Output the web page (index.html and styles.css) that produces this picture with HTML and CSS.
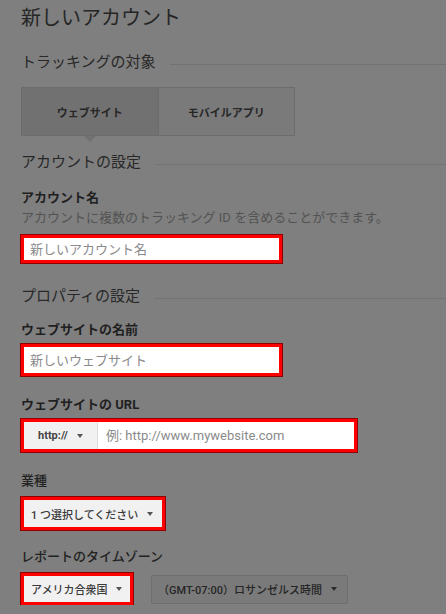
FILE: index.html
```html
<!DOCTYPE html>
<html lang="ja">
<head>
<meta charset="utf-8">
<title>新しいアカウント</title>
<link rel="stylesheet" href="styles.css">
</head>
<body>
<main class="page">
  <h1 class="title">新しいアカウント</h1>

  <h2 class="section sec-tracking"><span>トラッキングの対象</span></h2>
  <div class="tabs">
    <div class="tab active">ウェブサイト</div>
    <div class="tab">モバイルアプリ</div>
  </div>

  <h2 class="section sec-account"><span>アカウントの設定</span></h2>
  <div class="label lbl-accname">アカウント名</div>
  <p class="help">アカウントに複数のトラッキング ID を含めることができます。</p>
  <input class="hl text-input in-account" type="text" placeholder="新しいアカウント名">

  <h2 class="section sec-property"><span>プロパティの設定</span></h2>
  <div class="label lbl-site">ウェブサイトの名前</div>
  <input class="hl text-input in-site" type="text" placeholder="新しいウェブサイト">

  <div class="label lbl-url">ウェブサイトの URL</div>
  <div class="hl url-field">
    <div class="proto">http://<span class="caret"></span></div>
    <input class="url-input" type="text" placeholder="例: http://www.mywebsite.com">
  </div>

  <div class="label plain lbl-industry">業種</div>
  <div class="hl select sel-industry">1 つ選択してください<span class="caret"></span></div>

  <div class="label plain lbl-tz">レポートのタイムゾーン</div>
  <div class="tz-row">
    <div class="hl select sel-country">アメリカ合衆国<span class="caret"></span></div>
    <div class="select-dim">（GMT-07:00）ロサンゼルス時間<span class="caret dark"></span></div>
  </div>
</main>
</body>
</html>
```

FILE: styles.css
```css
html, body {
  margin: 0;
  padding: 0;
  background: #7f7f7f;
}

body {
  font-family: Roboto, "Noto Sans CJK JP", sans-serif;
  color: #222;
}

.page {
  padding: 6px 0 0 21px;
  display: flex;
  flex-direction: column;
  align-items: flex-start;
}

.title {
  margin: 0;
  font-size: 20px;
  line-height: 24px;
  font-weight: 400;
  color: #262626;
}

.section {
  margin: 0;
  align-self: stretch;
  display: flex;
  align-items: flex-start;
  font-size: 15px;
  line-height: 20px;
  font-weight: 400;
  color: #282828;
}

.section::after {
  content: "";
  flex: 1;
  height: 1px;
  background: #737373;
  margin: 12px 0 0 14px;
}

.sec-tracking { margin-top: 22px; }
.sec-account { margin-top: 16px; }
.sec-property { margin-top: 23px; }

.tabs {
  margin-top: 15px;
  display: flex;
  width: 274px;
  height: 49px;
  box-sizing: border-box;
  border: 1px solid #6c6c6c;
}

.tab {
  flex: 1;
  display: flex;
  align-items: center;
  justify-content: center;
  font-size: 11px;
  font-weight: 700;
  color: #262626;
  background: #7a7a7a;
}

.tab + .tab {
  border-left: 1px solid #6c6c6c;
}

.tab.active {
  background: #717171;
  position: relative;
}

.tab.active::after {
  content: "";
  position: absolute;
  top: 100%;
  left: 50%;
  margin-left: -6px;
  margin-top: 1px;
  border-left: 6px solid transparent;
  border-right: 6px solid transparent;
  border-top: 6px solid #717171;
}

.label {
  font-size: 13px;
  line-height: 18px;
  font-weight: 700;
  color: #1f1f1f;
}

.label.plain {
  font-weight: 500;
  color: #222;
}

.lbl-accname { margin-top: 17px; }
.lbl-site { margin-top: 15px; }
.lbl-url { margin-top: 20px; }
.lbl-industry { margin-top: 20px; }
.lbl-tz { margin-top: 18px; }

.help {
  margin: 2px 0 0;
  font-size: 13px;
  line-height: 18px;
  color: #535353;
}

.hl {
  box-sizing: border-box;
  border: 3px solid #ff0000;
  box-shadow: 0 0 0 1px #8e0000;
}

.text-input {
  display: block;
  width: 261px;
  margin: 0;
  padding: 0 6px;
  background: #fff;
  font-family: Roboto, "Noto Sans CJK JP", sans-serif;
  font-size: 13px;
  color: #333;
  outline: none;
}

.text-input::placeholder,
.url-input::placeholder {
  color: #8a8a8a;
  opacity: 1;
}

.in-account {
  margin-top: 8px;
  height: 28px;
}

.in-site {
  margin-top: 5px;
  height: 32px;
}

.url-field {
  margin-top: 5px;
  width: 336px;
  height: 33px;
  display: flex;
  background: #fff;
}

.proto {
  width: 74px;
  display: flex;
  align-items: center;
  padding-left: 14px;
  box-sizing: border-box;
  background: #f1f1f1;
  border-right: 1px solid #dcdcdc;
  font-size: 11px;
  font-weight: 700;
  color: #444;
}

.url-input {
  flex: 1;
  min-width: 0;
  border: 0;
  margin: 0;
  padding: 0 8px;
  background: #fff;
  font-family: Roboto, "Noto Sans CJK JP", sans-serif;
  font-size: 13px;
  outline: none;
}

.caret {
  display: inline-block;
  width: 0;
  height: 0;
  margin-left: 9px;
  border-left: 3.5px solid transparent;
  border-right: 3.5px solid transparent;
  border-top: 4px solid #555;
}

.caret.dark {
  border-top-color: #2a2a2a;
}

.select {
  display: flex;
  align-items: center;
  padding: 0 7px;
  background: #f1f1f1;
  font-size: 11px;
  font-weight: 500;
  color: #3a3a3a;
  white-space: nowrap;
}

.sel-industry {
  margin-top: 7px;
  width: 144px;
  height: 33px;
}

.tz-row {
  margin-top: 7px;
  display: flex;
  align-items: center;
  gap: 18px;
}

.sel-country {
  width: 112px;
  height: 32px;
}

.select-dim {
  box-sizing: border-box;
  width: 197px;
  height: 29px;
  display: flex;
  align-items: center;
  padding-left: 6px;
  border: 1px solid #6e6e6e;
  border-radius: 2px;
  background: #7a7a7a;
  font-size: 11px;
  font-weight: 500;
  color: #262626;
  white-space: nowrap;
}
```
